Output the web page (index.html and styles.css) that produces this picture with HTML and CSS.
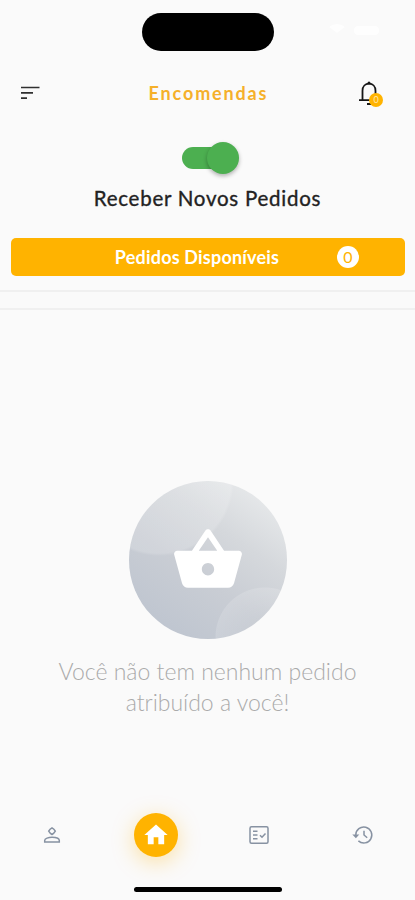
FILE: index.html
```html
<!DOCTYPE html>
<html lang="pt-BR">
<head>
  <meta charset="UTF-8" />
  <meta name="viewport" content="width=device-width, initial-scale=1.0"/>
  <title>Encomendas</title>
  <link rel="stylesheet" href="styles.css">
</head>
<body>

  <div class="status-bar">
    <div class="island"></div>
    <svg class="status-icons" width="54" height="16" viewBox="0 0 54 16">
      <path d="M1 4c5-4 11-4 16 0l-8 6z"/>
      <rect x="26" y="3" width="25" height="9" rx="4"/>
    </svg>
  </div>

  <header class="header">
    <svg class="menu-icon" width="20" height="16" viewBox="0 0 20 16">
      <path d="M1 2.500h18.500M1 7.800h12M1 13.200h6"/>
    </svg>
    <h1>Encomendas</h1>
    <div class="bell">
      <svg width="24" height="26" viewBox="0 0 24 26">
        <path d="M2 20.100h18.900M5.500 20V10.800C5.500 6.500 8.300 3.700 12 3.700s6.500 2.800 6.500 7.100V20M10 24h4"/>
        <circle cx="12" cy="3" r="1.500"/>
      </svg>
      <span class="bell-badge">0</span>
    </div>
  </header>

  <main>
    <div class="receber">
      <div class="switch"><span class="thumb"></span></div>
      <h2>Receber Novos Pedidos</h2>
    </div>

    <div class="disponiveis">
      <span class="disponiveis-texto">Pedidos Disponíveis</span>
      <span class="contador">0</span>
    </div>

    <div class="faixa"></div>

    <div class="vazio">
      <div class="circulo">
        <svg width="74" height="74" viewBox="0 0 24 24">
          <path d="M17.21 9l-4.38-6.56c-.19-.28-.51-.42-.83-.42-.32 0-.64.14-.83.43L6.79 9H2c-.55 0-1 .45-1 1 0 .09.01.18.04.27l2.54 9.27c.23.84 1 1.46 1.92 1.46h13c.92 0 1.69-.62 1.93-1.46l2.54-9.27L23 10c0-.55-.45-1-1-1h-4.79zM9 9l3-4.4L15 9H9zm3 8c-1.1 0-2-.9-2-2s.9-2 2-2 2 .9 2 2-.9 2-2 2z"/>
        </svg>
      </div>
      <p>Você não tem nenhum pedido<br>atribuído a você!</p>
    </div>
  </main>

  <nav class="nav">
    <a>
      <svg width="22" height="22" viewBox="0 0 22 22">
        <path d="M11 3.900c1.400.8 2.500 1.900 3.300 3.300-.8 1.400-1.900 2.500-3.300 3.300-1.400-.8-2.500-1.900-3.300-3.300.8-1.400 1.900-2.500 3.300-3.300zM3.700 18v-1.400c0-2.200 3.800-3.300 7.300-3.300s7.300 1.100 7.300 3.300V18z"/>
      </svg>
    </a>
    <a class="ativo">
      <svg width="28" height="28" viewBox="0 0 24 24"><path d="M10 20v-6h4v6h5v-8h3L12 3 2 12h3v8z"/></svg>
    </a>
    <a>
      <svg width="22" height="22" viewBox="0 0 22 22">
        <rect x="2" y="2.700" width="18" height="16.600" rx="1.500"/>
        <path d="M5 7.200h4.500M5 11h4.500M5 14.800h4.500M12 11.200l2 2 3.500-3.800"/>
      </svg>
    </a>
    <a>
      <svg width="22" height="22" viewBox="0 0 22 22">
        <path d="M3.800 11a8 8 0 1 1 2.600 5.900M12 6.700V11l3.200 2.800"/>
        <path class="seta" d="M.3 10.600h7L3.900 14.300z"/>
      </svg>
    </a>
  </nav>
  <div class="home-indicator"></div>

</body>
</html>
```
FILE: styles.css
```css
* { box-sizing: border-box; }
body {
  margin: 0;
  height: 900px;
  display: flex;
  flex-direction: column;
  overflow: hidden;
  font-family: 'Lato', sans-serif;
  background-color: #fafafa;
  color: #222;
}
h1, h2, p { margin: 0; }
.status-bar {
  height: 64px;
  padding: 13px 33px 0 142px;
  display: flex;
  justify-content: space-between;
}
.island {
  width: 132px;
  height: 38px;
  border-radius: 19px;
  background: #000;
}
.status-icons {
  margin-top: 10px;
  fill: #fff;
  opacity: .8;
}
.header {
  height: 57px;
  padding: 0 30px 0 20px;
  display: grid;
  grid-template-columns: 28px 1fr 28px;
  align-items: center;
}
.menu-icon {
  stroke: #303030;
  stroke-width: 1.7;
}
h1 {
  text-align: center;
  font-size: 18px;
  line-height: 24px;
  letter-spacing: 1.85px;
  color: #f5b02a;
  padding-left: 12px;
}
.bell {
  position: relative;
  height: 26px;
}
.bell svg {
  fill: none;
  stroke: #161616;
  stroke-width: 1.8;
}
.bell svg circle { fill: #161616; stroke: none; }
.bell-badge {
  position: absolute;
  left: 12px;
  top: 13px;
  width: 14px;
  height: 14px;
  border-radius: 50%;
  background: #ffb300;
  color: #ffe7b0;
  font-size: 9px;
  line-height: 14px;
  text-align: center;
}
main { flex: 1; }
.receber {
  height: 117px;
  padding-top: 26px;
  display: flex;
  flex-direction: column;
  align-items: center;
}
.switch {
  width: 52px;
  height: 22px;
  border-radius: 11px;
  background: #4caf50;
}
.thumb {
  display: block;
  width: 32px;
  height: 32px;
  margin: -5px 0 0 25px;
  border-radius: 50%;
  background: #4caf50;
  box-shadow: 0 2px 4px rgba(0, 0, 0, .3);
}
h2 {
  margin-top: 15px;
  font-size: 20.5px;
  line-height: 28px;
  font-weight: 400;
  letter-spacing: .75px;
  -webkit-text-stroke: .35px #222;
}
.disponiveis {
  height: 38px;
  margin: 0 10px 0 11px;
  padding: 0 46px 0 46px;
  border-radius: 5px;
  background: #ffb300;
  display: grid;
  grid-template-columns: 1fr 22px;
  align-items: center;
}
.disponiveis-texto {
  color: #fff;
  font-size: 18px;
  font-weight: 700;
  letter-spacing: .2px;
  text-align: center;
}
.contador {
  height: 22px;
  border-radius: 50%;
  background: #fff;
  color: #ffb300;
  font-size: 16px;
  line-height: 22px;
  text-align: center;
}
.faixa {
  height: 20px;
  margin-top: 14px;
  border-top: 2px solid #f0f0f0;
  border-bottom: 2px solid #f0f0f0;
}
.vazio {
  padding-top: 171px;
  display: flex;
  flex-direction: column;
  align-items: center;
}
.circulo {
  width: 158px;
  height: 158px;
  border-radius: 50%;
  display: flex;
  align-items: center;
  justify-content: center;
  background:
    radial-gradient(circle at 136px 156px, rgba(255, 255, 255, .05) 20px, rgba(255, 255, 255, .15) 49px, transparent 50px),
    radial-gradient(circle at 30px 0, rgba(255, 255, 255, .17) 72px, transparent 75px),
    linear-gradient(35deg, #bdc4cf 8%, #c9cdd4 42%, #d5d8dc 65%, #ebedee 95%);
}
.circulo svg { fill: #fff; }
.vazio p {
  margin-top: 17px;
  font-size: 23px;
  line-height: 31px;
  font-weight: 300;
  text-align: center;
  color: #aaa;
}
.nav {
  height: 102px;
  padding-top: 15px;
  display: grid;
  grid-template-columns: repeat(4, 1fr);
  justify-items: center;
  align-items: start;
}
.nav a {
  width: 44px;
  height: 44px;
  border-radius: 50%;
  display: flex;
  align-items: center;
  justify-content: center;
}
.nav svg {
  fill: none;
  stroke: #8792a2;
  stroke-width: 1.5;
}
.nav .seta { fill: #8792a2; stroke: none; }
.nav .ativo {
  background: #ffb300;
  box-shadow: 0 5px 22px rgba(255, 179, 0, .35);
}
.nav .ativo svg { fill: #fff; stroke: none; }
.home-indicator {
  position: absolute;
  left: 134px;
  bottom: 8px;
  width: 148px;
  height: 5px;
  border-radius: 3px;
  background: #000;
}
```
